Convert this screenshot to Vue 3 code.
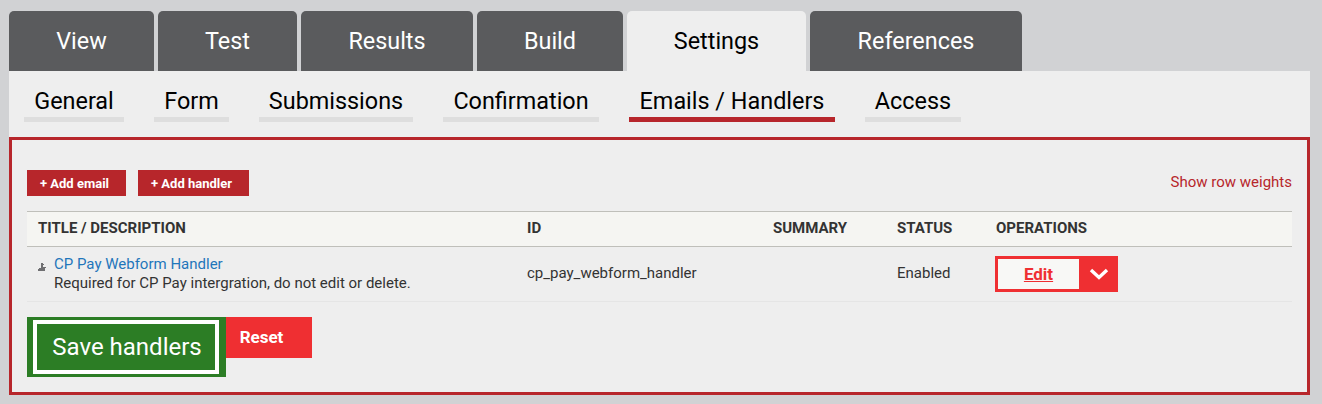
<script setup>
const tabs = [
  { label: 'View', width: 145 },
  { label: 'Test', width: 139 },
  { label: 'Results', width: 172 },
  { label: 'Build', width: 146 },
  { label: 'Settings', width: 179, active: true },
  { label: 'References', width: 212 }
]
const subtabs = [
  { label: 'General', width: 100 },
  { label: 'Form', width: 75 },
  { label: 'Submissions', width: 154 },
  { label: 'Confirmation', width: 156 },
  { label: 'Emails / Handlers', width: 206, active: true },
  { label: 'Access', width: 96 }
]
</script>

<template>
  <div class="page">
    <nav class="tabs">
      <a
        v-for="t in tabs"
        :key="t.label"
        class="tab"
        :class="{ active: t.active }"
        :style="{ width: t.width + 'px' }"
      >{{ t.label }}</a>
    </nav>
    <div class="panel">
      <nav class="subtabs">
        <a
          v-for="s in subtabs"
          :key="s.label"
          class="subtab"
          :class="{ active: s.active }"
          :style="{ width: s.width + 'px' }"
        >{{ s.label }}</a>
      </nav>
      <section class="box">
        <div class="actions">
          <div class="adds">
            <a class="add">+ Add email</a>
            <a class="add">+ Add handler</a>
          </div>
          <a class="weights">Show row weights</a>
        </div>
        <table class="grid">
          <colgroup>
            <col class="c1" /><col class="c2" /><col class="c3" /><col class="c4" /><col />
          </colgroup>
          <thead>
            <tr>
              <th>Title / Description</th>
              <th>ID</th>
              <th>Summary</th>
              <th>Status</th>
              <th>Operations</th>
            </tr>
          </thead>
          <tbody>
            <tr>
              <td>
                <div class="title-cell">
                  <svg class="handle" width="9" height="8" viewBox="0 0 9 8">
                    <path d="M4 0h2v1h1v1H6v2h3v1H8v3H1V6h1V5h2z" fill="#6f6f72" />
                  </svg>
                  <div>
                    <a class="link">CP Pay Webform Handler</a>
                    <div class="desc">Required for CP Pay intergration, do not edit or delete.</div>
                  </div>
                </div>
              </td>
              <td class="mid">cp_pay_webform_handler</td>
              <td></td>
              <td class="mid">Enabled</td>
              <td>
                <div class="ops">
                  <a class="edit">Edit</a>
                  <span class="toggle">
                    <svg width="20" height="12" viewBox="0 0 20 12">
                      <path d="M2 2l8 7.5L18 2" fill="none" stroke="#fff" stroke-width="3.4" />
                    </svg>
                  </span>
                </div>
              </td>
            </tr>
          </tbody>
        </table>
        <div class="form-actions">
          <div class="save-wrap"><button class="save">Save handlers</button></div>
          <button class="reset">Reset</button>
        </div>
      </section>
    </div>
  </div>
</template>

<style>
html, body { margin: 0; background: #d1d2d4; }
</style>

<style scoped>
.page {
  width: 1322px;
  height: 404px;
  box-sizing: border-box;
  padding: 11px 12px 0 9px;
  background: #d1d2d4;
  font-family: Roboto, "Liberation Sans", sans-serif;
  overflow: hidden;
}
.tabs { display: flex; gap: 4px; height: 60px; }
.tab {
  display: flex;
  align-items: center;
  justify-content: center;
  height: 60px;
  box-sizing: border-box;
  padding-bottom: 1px;
  background: #5a5b5d;
  color: #fff;
  font-size: 23.4px;
  border-radius: 5px 5px 0 0;
}
.tab.active { background: #eee; color: #000; }
.panel { background: #eee; height: 324px; }
.subtabs { display: flex; gap: 30px; padding: 0 15px; height: 66px; box-sizing: border-box; }
.subtab {
  height: 51px;
  box-sizing: border-box;
  padding: 16px 0 0;
  border-bottom: 5px solid #dedede;
  color: #000;
  font-size: 23.4px;
  line-height: 28px;
  text-align: center;
  white-space: nowrap;
}
.subtab.active { border-bottom-color: #b7262b; }
.box {
  height: 258px;
  box-sizing: border-box;
  border: 3px solid #b7262b;
  padding: 30px 15px 0;
}
.actions {
  display: flex;
  justify-content: space-between;
  align-items: flex-start;
  height: 41px;
}
.adds { display: flex; gap: 12px; }
.add {
  height: 26px;
  display: flex;
  align-items: center;
  padding: 0 17px 0 13px;
  background: #b7262b;
  color: #fff;
  font-size: 13px;
  font-weight: 700;
}
.weights { color: #b7262b; font-size: 15px; line-height: 24px; }
.grid {
  width: 1265px;
  border-collapse: collapse;
  table-layout: fixed;
  font-size: 15px;
  color: #333;
}
.c1 { width: 489px; }
.c2 { width: 246px; }
.c3 { width: 124px; }
.c4 { width: 99px; }
th {
  height: 35px;
  box-sizing: border-box;
  padding: 0 0 2px 11px;
  text-align: left;
  text-transform: uppercase;
  font-weight: 700;
  background: #f5f5f2;
  border-top: 1px solid #bfbfba;
  border-bottom: 1px solid #bfbfba;
}
td {
  height: 55px;
  box-sizing: border-box;
  padding: 0 0 0 11px;
  vertical-align: middle;
  border-bottom: 1px solid #e5e5e5;
}
td.mid { padding-bottom: 2px; }
.title-cell { display: flex; align-items: flex-start; margin-left: -1px; gap: 8px; line-height: 19px; }
.handle { margin-top: 8px; flex: none; }
.link { color: #1f76bb; }
.desc { color: #333; }
.ops { display: flex; width: 123px; height: 36px; margin-left: -1px; }
.edit {
  width: 84px;
  box-sizing: border-box;
  border: 3px solid #ef2f32;
  border-right: 0;
  background: #f8f8f6;
  color: #ef2f32;
  font-size: 17px;
  font-weight: 700;
  text-decoration: underline;
  text-align: center;
  line-height: 30px;
}
.toggle {
  flex: 1;
  background: #ef2f32;
  display: flex;
  align-items: center;
  justify-content: center;
}
.form-actions { display: flex; align-items: flex-start; margin-top: 15px; }
.save-wrap { background: #2c7d25; padding: 3px 7px 3px 6px; }
.save {
  display: block;
  width: 186px;
  height: 54px;
  box-sizing: border-box;
  border: 4px solid #fff;
  background: #2c7d25;
  color: #fff;
  font-family: inherit;
  font-size: 24px;
  padding: 0 0 0 2px;
}
.reset {
  width: 86px;
  height: 41px;
  box-sizing: border-box;
  padding: 0 15px 2px 0;
  border: 0;
  background: #ef2f32;
  color: #fff;
  font-family: inherit;
  font-size: 17px;
  font-weight: 700;
}
</style>
